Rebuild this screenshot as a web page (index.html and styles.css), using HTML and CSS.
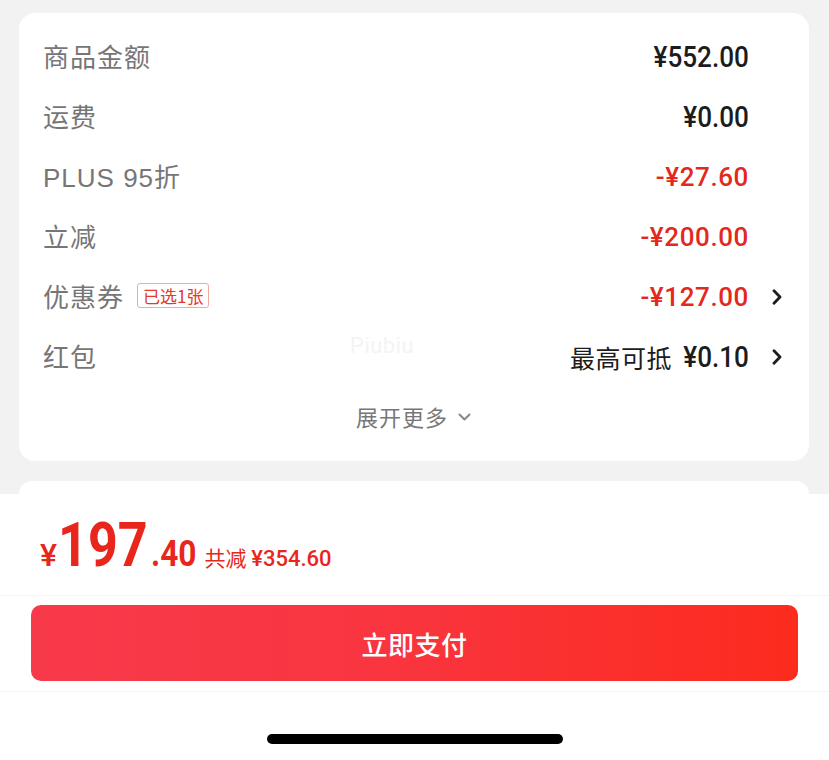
FILE: index.html
```html
<!DOCTYPE html>
<html lang="zh-CN">
<head>
<meta charset="utf-8">
<link rel="stylesheet" href="styles.css">
</head>
<body>
<div class="page">
  <section class="card">
    <div class="row">
      <span class="label">商品金额</span>
      <span class="value cond">¥552.00</span>
      <span class="arrow-col"></span>
    </div>
    <div class="row">
      <span class="label">运费</span>
      <span class="value cond">¥0.00</span>
      <span class="arrow-col"></span>
    </div>
    <div class="row">
      <span class="label">PLUS 95折</span>
      <span class="value red">-¥27.60</span>
      <span class="arrow-col"></span>
    </div>
    <div class="row">
      <span class="label">立减</span>
      <span class="value red">-¥200.00</span>
      <span class="arrow-col"></span>
    </div>
    <div class="row">
      <span class="label">优惠券<span class="tag">已选1张</span></span>
      <span class="value red">-¥127.00</span>
      <span class="arrow-col"><svg class="chev" viewBox="0 0 10 16" width="10" height="16"><path d="M2 1.8 L8 8 L2 14.2" fill="none" stroke="#1e1e1e" stroke-width="2.8" stroke-linecap="round" stroke-linejoin="round"/></svg></span>
    </div>
    <div class="row">
      <span class="label">红包</span>
      <span class="value"><span class="cn">最高可抵</span><span class="cond">¥0.10</span></span>
      <span class="arrow-col"><svg class="chev" viewBox="0 0 10 16" width="10" height="16"><path d="M2 1.8 L8 8 L2 14.2" fill="none" stroke="#1e1e1e" stroke-width="2.8" stroke-linecap="round" stroke-linejoin="round"/></svg></span>
    </div>
    <div class="expand">展开更多<svg class="down" viewBox="0 0 14 10" width="15" height="10"><path d="M2 2.5 L7 7.5 L12 2.5" fill="none" stroke="#888" stroke-width="2" stroke-linecap="round" stroke-linejoin="round"/></svg></div>
    <span class="watermark">Piubiu</span>
  </section>
  <section class="card2"></section>
  <footer class="bar">
    <div class="price-row">
      <span class="p-yen">¥</span><span class="p-int">197</span><span class="p-dec">.40</span>
      <span class="p-save">共减 <span class="p-save-num">¥354.60</span></span>
    </div>
    <div class="btn-row">
      <button class="pay">立即支付</button>
    </div>
    <div class="home-row"><span class="home"></span></div>
  </footer>
</div>
</body>
</html>
```
FILE: styles.css
```css
* { box-sizing: border-box; }
html, body {
  margin: 0;
  padding: 0;
  background: #f2f2f2;
  height: 760px;
  overflow: hidden;
  font-family: "Noto Sans CJK SC", "Roboto", sans-serif;
}
.page {
  display: flex;
  flex-direction: column;
  height: 760px;
}
.card {
  position: relative;
  margin: 13px 20px 0 19px;
  background: #fff;
  border-radius: 16px;
  padding: 14px 0 16px 24px;
}
.row {
  display: flex;
  align-items: center;
  height: 60px;
}
.label {
  flex: 1;
  display: flex;
  align-items: center;
  font-family: "Liberation Sans", "Noto Sans CJK SC", sans-serif;
  font-size: 26px;
  color: #767676;
  letter-spacing: 1px;
  padding-bottom: 3px;
}
.tag {
  margin-left: 13px;
  font-family: "Noto Sans CJK SC", sans-serif;
  font-size: 17px;
  line-height: 21px;
  color: #e4392c;
  border: 1px solid #f2a89f;
  border-radius: 3px;
  padding: 1px 5px;
  letter-spacing: 0;
}
.value {
  font-family: "Roboto", "Noto Sans CJK SC", sans-serif;
  font-size: 26px;
  font-weight: 500;
  color: #1c1c1c;
  display: flex;
  align-items: center;
}
.value.red { color: #e3291d; letter-spacing: 0.6px; }
.cond {
  display: inline-block;
  font-family: "Roboto", sans-serif;
  font-size: 29px;
  font-weight: 500;
  transform: scaleX(0.9);
  transform-origin: right center;
  margin-left: -6px;
}
.cn {
  font-family: "Noto Sans CJK SC", sans-serif;
  font-size: 25px;
  font-weight: 400;
  margin-right: 10px;
  letter-spacing: 0.5px;
}
.arrow-col {
  width: 60px;
  display: flex;
  justify-content: flex-end;
  padding-right: 27px;
}
.chev { display: block; }
.expand {
  height: 58px;
  display: flex;
  align-items: center;
  justify-content: center;
  font-size: 22px;
  color: #777;
  margin-left: -24px;
  letter-spacing: 1px;
}
.down { margin-left: 9px; margin-top: 2px; }
.watermark {
  position: absolute;
  left: 331px;
  top: 320px;
  font-family: "Roboto", sans-serif;
  font-size: 22px;
  color: #f4f4f4;
  letter-spacing: 0.5px;
}
.card2 {
  margin: 20px 20px 0 19px;
  height: 13px;
  background: #fff;
  border-radius: 16px 16px 0 0;
}
.bar {
  flex: 1;
  background: #fff;
  display: flex;
  flex-direction: column;
}
.price-row {
  height: 102px;
  display: flex;
  align-items: baseline;
  padding: 20px 0 0 40px;
  color: #e8261c;
  font-family: "Roboto", sans-serif;
  font-weight: 700;
  border-bottom: 1px solid #f6f6f6;
}
.p-yen { font-size: 32px; font-weight: 500; }
.p-int {
  display: inline-block;
  font-size: 62px;
  line-height: 62px;
  transform: scaleX(0.84);
  transform-origin: left center;
  margin-right: -14px;
  margin-left: 1px;
}
.p-dec {
  display: inline-block;
  font-size: 36px;
  transform: scaleX(0.88);
  transform-origin: left center;
  margin-right: -6px;
}
.p-save {
  font-family: "Noto Sans CJK SC", sans-serif;
  font-size: 21px;
  font-weight: 400;
  margin-left: 8px;
}
.p-save-num { font-family: "Roboto", sans-serif; font-weight: 500; font-size: 22px; }
.btn-row {
  height: 96px;
  padding: 9px 31px 0 31px;
  border-bottom: 1px solid #f6f6f6;
}
.pay {
  width: 100%;
  height: 76px;
  border: 0;
  border-radius: 10px;
  background: linear-gradient(90deg, #f73a4b 0%, #f93540 45%, #fc2b1d 100%);
  color: #fff;
  font-family: "Noto Sans CJK SC", sans-serif;
  font-size: 26px;
  font-weight: 500;
  letter-spacing: 0.5px;
  padding: 0;
}
.home-row {
  flex: 1;
  display: flex;
  justify-content: center;
  padding-top: 42px;
}
.home {
  width: 296px;
  height: 10px;
  border-radius: 5px;
  background: #000;
}
```
